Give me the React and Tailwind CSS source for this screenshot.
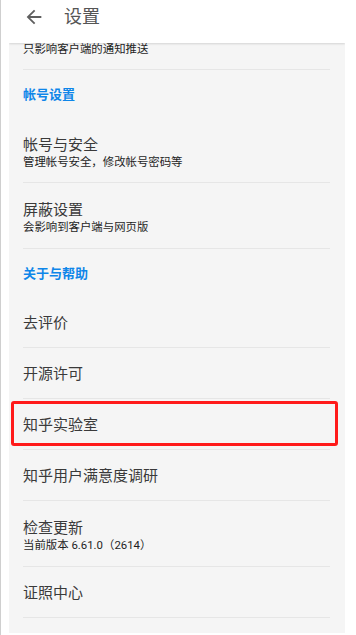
const FONT = "font-['Roboto','Noto_Sans_CJK_SC',sans-serif]"

function BackIcon() {
  return (
    <svg width="22" height="22" viewBox="0 0 24 24" fill="#5f5f5f" aria-hidden>
      <path d="M20 11H7.83l5.59-5.59L12 4l-8 8 8 8 1.41-1.41L7.83 13H20v-2z" />
    </svg>
  )
}

function SectionTitle({ children }) {
  return (
    <div className="h-[48px] pl-[14px] pt-[17px]">
      <div className="text-[13px] font-bold leading-[16px] text-[#0e86e9]">{children}</div>
    </div>
  )
}

function Row({ title, sub, height = 'h-[51px]', marked = false }) {
  return (
    <div className={`relative ${height} pl-[14px] pr-[15px]`}>
      <div
        className={`flex h-full flex-col border-b border-[#e6e6e6] ${
          sub ? 'justify-start pt-[17px]' : 'justify-center pt-[2px]'
        }`}
      >
        <div className="text-[15px] leading-[20px] text-[#3a3a3a]">{title}</div>
        {sub && <div className="text-[11.4px] leading-[15px] text-[#1e1e1e]">{sub}</div>}
      </div>
      {marked && (
        <div className="absolute left-[2px] right-[7px] top-[2px] bottom-[4px] rounded-[3px] border-[3px] border-[#ff1a1a]" />
      )}
    </div>
  )
}

export default function App() {
  return (
    <div className={`flex h-[635px] w-[356px] border-l border-[#cfcfcf] bg-white pl-[8px] ${FONT}`}>
      <div className="flex h-[633px] w-[336px] flex-col overflow-hidden bg-[#f5f5f5]">
        <div className="relative z-10 flex h-[43px] shrink-0 items-center gap-[19px] bg-white pb-[9px] pl-[14px] shadow-[0_1px_2px_rgba(0,0,0,0.14)]">
          <BackIcon />
          <div className="text-[18px] leading-[22px] text-[#555555]">设置</div>
        </div>

        {/* the row above is scrolled under the header: only its hint shows */}
        <div className="h-[27px] shrink-0 pl-[14px] pr-[15px]">
          <div className="h-full border-b border-[#e6e6e6] pt-[0px]">
            <div className="text-[11.4px] leading-[12px] text-[#1e1e1e]">只影响客户端的通知推送</div>
          </div>
        </div>

        <SectionTitle>帐号设置</SectionTitle>
        <Row title="帐号与安全" sub="管理帐号安全，修改帐号密码等" height="h-[65px]" />
        <Row title="屏蔽设置" sub="会影响到客户端与网页版" height="h-[66px]" />

        <SectionTitle>关于与帮助</SectionTitle>
        <Row title="去评价" />
        <Row title="开源许可" />
        <Row title="知乎实验室" marked />
        <Row title="知乎用户满意度调研" />
        <Row title="检查更新" sub="当前版本 6.61.0（2614）" height="h-[66px]" />
        <Row title="证照中心" />
      </div>
    </div>
  )
}
